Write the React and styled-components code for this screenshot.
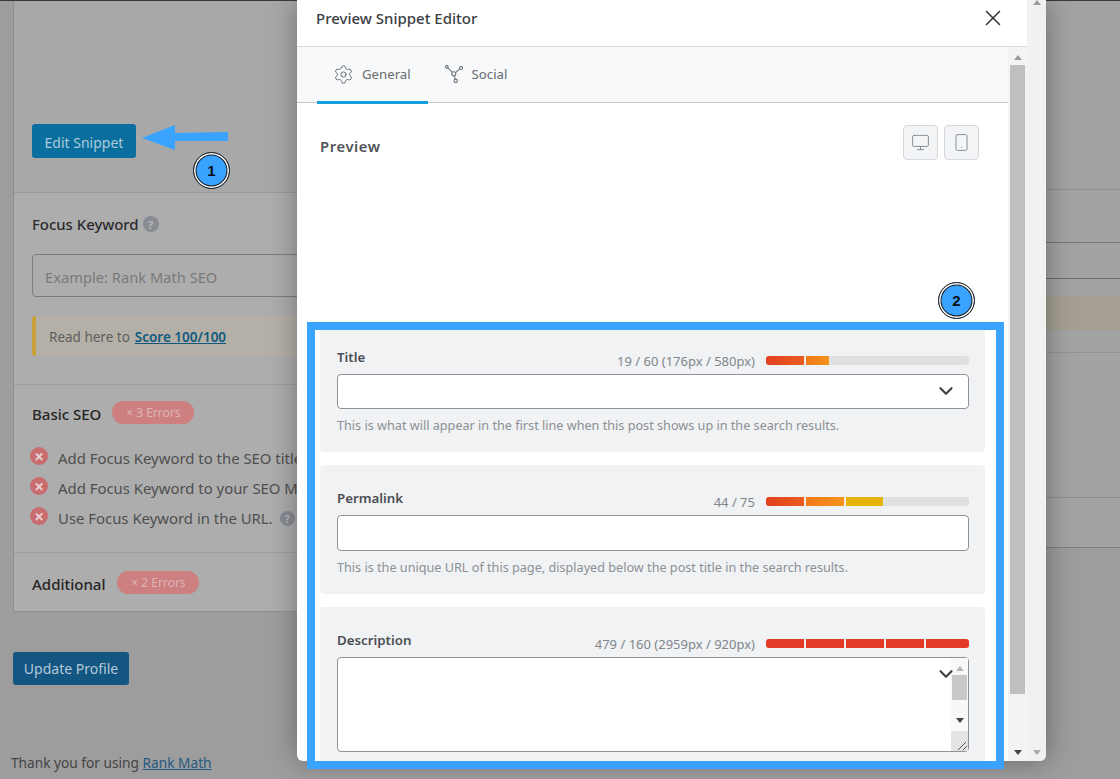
import React from 'react';
import styled, { createGlobalStyle } from 'styled-components';
import { Settings, Monitor, Smartphone, X, ChevronDown } from 'lucide-react';

const GlobalStyle = createGlobalStyle`
  html, body {
    margin: 0;
    padding: 0;
    background: #a0a0a0;
  }

  * {
    box-sizing: border-box;
  }
`;

const errorRows = [
  { text: 'Add Focus Keyword to the SEO title.' },
  { text: 'Add Focus Keyword to your SEO Meta' },
  { text: 'Use Focus Keyword in the URL.', help: true },
];

// what is left of the page to the right of the modal
const stripRows = [
  { height: 189, line: '#909090' },
  { height: 53, line: '#767676' },
  { height: 36, line: '#6c6c6c' },
  { height: 17 },
  { height: 34, bg: '#a59f93' },
  { height: 23, line: '#939393' },
  { height: 145, line: '#8f8f8f' },
  { height: 50, line: '#7d7d7d' },
];

const RED = '#e13b26';
const titleBar = [
  { width: 40, bg: 'linear-gradient(90deg, #e2401f, #ea5c1e)' },
  { width: 23, bg: 'linear-gradient(90deg, #f07a1a, #f5931a)', last: true },
];
const permalinkBar = [
  { width: 40, bg: 'linear-gradient(90deg, #e2401f, #ea5c1e)' },
  { width: 40, bg: 'linear-gradient(90deg, #f07a1a, #f5931a)' },
  { width: 37, bg: '#e6b30c', last: true },
];
const descriptionBar = [
  { width: 40, bg: RED },
  { width: 40, bg: RED },
  { width: 40, bg: RED },
  { width: 40, bg: RED },
  { width: 43, bg: RED, last: true },
];

const ProgressBar = ({ segments }) => (
  <Track>
    {segments.map((s, i) => (
      <Segment key={i} $width={s.width} $bg={s.bg} $last={s.last} />
    ))}
  </Track>
);

const SocialIcon = () => (
  <svg width="18" height="18" viewBox="0 0 18 18" fill="none" stroke="#6f7478" strokeWidth="1.1">
    <circle cx="1.8" cy="1.8" r="1.3" />
    <circle cx="16" cy="3" r="1.5" />
    <circle cx="8.8" cy="8.8" r="2" />
    <circle cx="10.7" cy="15.8" r="1.7" />
    <path d="M2.8 2.7 7.3 7.4M14.7 3.8 10.5 7.7M9.3 10.7 10.2 14.1" />
  </svg>
);

const App = () => (
  <Page>
    <GlobalStyle />

    <MainColumn>
      <Panel>
        <SnippetSection>
          <EditButton>Edit Snippet</EditButton>
        </SnippetSection>

        <FocusSection>
          <FocusTitle>
            Focus Keyword <HelpDot $size={16}>?</HelpDot>
          </FocusTitle>
          <KeywordInput placeholder="Example: Rank Math SEO" readOnly />
          <Notice>
            Read here to <NoticeLink href="#">Score 100/100</NoticeLink>
          </Notice>
        </FocusSection>

        <BasicSection>
          <SectionHead>
            <SectionTitle>Basic SEO</SectionTitle>
            <ErrorPill>× 3 Errors</ErrorPill>
          </SectionHead>
          <ErrorList>
            {errorRows.map(row => (
              <ErrorRow key={row.text}>
                <ErrorIcon>×</ErrorIcon>
                {row.text}
                {row.help && <HelpDot $size={15} $offset={-3}>?</HelpDot>}
              </ErrorRow>
            ))}
          </ErrorList>
        </BasicSection>

        <AdditionalSection>
          <SectionTitle>Additional</SectionTitle>
          <ErrorPill>× 2 Errors</ErrorPill>
        </AdditionalSection>
      </Panel>

      <UpdateButton>Update Profile</UpdateButton>
      <Footer>
        Thank you for using <FooterLink href="#">Rank Math</FooterLink>
      </Footer>
    </MainColumn>

    <SideStrip>
      {stripRows.map((row, i) => (
        <StripRow key={i} $height={row.height} $line={row.line} $bg={row.bg} />
      ))}
    </SideStrip>

    <Modal>
      <Dialog>
        <Header>
          <HeaderTitle>Preview Snippet Editor</HeaderTitle>
          <X size={26} strokeWidth={1.4} color="#33373b" />
        </Header>

        <DialogBody>
          <Content>
            <Tabs>
              <Tab $active>
                <TabIcon>
                  <Settings size={21} strokeWidth={1.1} color="#5f6468" />
                </TabIcon>
                General
              </Tab>
              <Tab>
                <SocialIcon />
                Social
              </Tab>
            </Tabs>

            <Scroller>
              <PreviewRow>
                <PreviewLabel>Preview</PreviewLabel>
                <DeviceButtons>
                  <DeviceButton>
                    <Monitor size={19} strokeWidth={1.1} color="#7c8186" />
                  </DeviceButton>
                  <DeviceButton>
                    <Smartphone size={19} strokeWidth={1.1} color="#7c8186" />
                  </DeviceButton>
                </DeviceButtons>
              </PreviewRow>

              <Cards>
                <Card $height={128}>
                  <CardHead>
                    <CardLabel>Title</CardLabel>
                    <Count>19 / 60 (176px / 580px)</Count>
                    <ProgressBar segments={titleBar} />
                  </CardHead>
                  <Field>
                    <FieldChevron>
                      <ChevronDown size={22} strokeWidth={2.4} color="#3f4347" />
                    </FieldChevron>
                  </Field>
                  <Help>This is what will appear in the first line when this post shows up in the search results.</Help>
                </Card>

                <Card $height={129}>
                  <CardHead>
                    <CardLabel>Permalink</CardLabel>
                    <Count>44 / 75</Count>
                    <ProgressBar segments={permalinkBar} />
                  </CardHead>
                  <Field $height={36} />
                  <Help>This is the unique URL of this page, displayed below the post title in the search results.</Help>
                </Card>

                <Card $height={170}>
                  <CardHead>
                    <CardLabel>Description</CardLabel>
                    <Count>479 / 160 (2959px / 920px)</Count>
                    <ProgressBar segments={descriptionBar} />
                  </CardHead>
                  <Field $height={95}>
                    <FieldChevron>
                      <ChevronDown size={22} strokeWidth={2.4} color="#3f4347" />
                    </FieldChevron>
                    <AreaScrollbar>
                      <Arrow $up $color="#b5b5b5" />
                      <AreaThumb />
                      <Arrow $color="#444" />
                      <Resizer>
                        <svg width="12" height="12" viewBox="0 0 12 12" stroke="#555" fill="none">
                          <path d="M2 11 10 3M7 11 11 7" />
                        </svg>
                      </Resizer>
                    </AreaScrollbar>
                  </Field>
                </Card>
              </Cards>
            </Scroller>
          </Content>

          <InnerScrollbar>
            <Arrow $up $color="#9c9c9c" />
            <InnerThumb />
            <Arrow $color="#444" />
          </InnerScrollbar>
        </DialogBody>
      </Dialog>

      <OuterScrollbar>
        <Arrow $up $color="#9c9c9c" />
        <Arrow $color="#aaa" />
      </OuterScrollbar>
    </Modal>

    <PointerArrow width="90" height="30" viewBox="0 0 90 30">
      <polygon points="0,14 33,1 33,9 86,8 86,17 33,17 33,26" fill="#3aa3ff" />
    </PointerArrow>
    <StepBadge $left={193} $top={152}>1</StepBadge>
    <StepBadge $left={938} $top={282}>2</StepBadge>
    <HighlightFrame />
  </Page>
);

const Page = styled.div`
  position: relative;
  display: flex;
  width: 1120px;
  height: 779px;
  overflow: hidden;
  background: #9d9d9d;
  font-family: 'Noto Sans', 'Open Sans', sans-serif;
`;

const MainColumn = styled.div`
  flex: none;
  width: 1046px;
  border-top: 1px solid #3a3a3a;
`;

const Panel = styled.div`
  margin-left: 13px;
  height: 611px;
  background: #adadad;
  border-left: 1px solid #8f8f8f;
  border-bottom: 1px solid #8f8f8f;
`;

const SnippetSection = styled.div`
  height: 192px;
  padding: 123px 0 0 18px;
  background: #a8a8a8;
  border-bottom: 1px solid #9a9a9a;
`;

const EditButton = styled.button`
  width: 104px;
  height: 34px;
  padding: 2px 0 0;
  border: 0;
  border-radius: 3px;
  background: #0a6f9f;
  color: #aacbdb;
  font: 14px 'Noto Sans', sans-serif;
`;

const FocusSection = styled.div`
  height: 192px;
  padding: 20px 0 0 18px;
  border-bottom: 1px solid #9f9f9f;
`;

const FocusTitle = styled.div`
  display: flex;
  align-items: center;
  gap: 4px;
  height: 22px;
  color: #2c2a2c;
  font-size: 14.9px;
  font-weight: 500;
`;

const HelpDot = styled.span`
  display: inline-flex;
  align-items: center;
  justify-content: center;
  width: ${p => p.$size}px;
  height: ${p => p.$size}px;
  margin-left: ${p => p.$offset || 0}px;
  border-radius: 50%;
  background: #888c92;
  color: #b9bbbe;
  font-size: 11px;
  font-weight: 700;
`;

const KeywordInput = styled.input`
  display: block;
  width: 100%;
  height: 43px;
  margin-top: 19px;
  padding: 2px 12px 0;
  border: 1px solid #7d7d7d;
  border-radius: 4px;
  background: #adadad;
  font: 14.7px 'Noto Sans', sans-serif;

  &::placeholder {
    color: #7a7a7a;
    opacity: 1;
  }
`;

const Notice = styled.div`
  display: flex;
  align-items: center;
  gap: 5px;
  height: 40px;
  margin-top: 19px;
  padding: 2px 0 0 13px;
  border-left: 4px solid #c99f3a;
  border-radius: 3px 0 0 3px;
  background: #b4b0a8;
  color: #5e5e5e;
  font-size: 13.5px;
`;

const NoticeLink = styled.a`
  color: #0f5a7e;
  font-weight: 600;
`;

const BasicSection = styled.div`
  height: 168px;
  padding: 16px 0 0 18px;
  border-bottom: 1px solid #9f9f9f;
`;

const SectionHead = styled.div`
  display: flex;
  align-items: center;
  gap: 11px;
`;

const SectionTitle = styled.div`
  margin-top: 3px;
  color: #242424;
  font-size: 15px;
  font-weight: 500;
`;

const ErrorPill = styled.span`
  display: inline-flex;
  align-items: center;
  justify-content: center;
  width: 82px;
  height: 23px;
  border-radius: 12px;
  background: #ce7f80;
  color: #dcb5b5;
  font-size: 12px;
`;

const ErrorList = styled.div`
  display: flex;
  flex-direction: column;
  margin-top: 19px;
`;

const ErrorRow = styled.div`
  display: flex;
  align-items: center;
  gap: 10px;
  height: 30px;
  margin-left: -2px;
  color: #4f4f4f;
  font-size: 14.9px;
  white-space: nowrap;
`;

const ErrorIcon = styled.span`
  display: inline-flex;
  align-items: center;
  justify-content: center;
  flex: none;
  width: 18px;
  height: 18px;
  margin-top: -4px;
  border-radius: 50%;
  background: #c96c70;
  color: #e8d0d0;
  font-size: 17px;
  font-weight: 700;
  line-height: 1;
`;

const AdditionalSection = styled.div`
  display: flex;
  align-items: center;
  gap: 12px;
  height: 58px;
  padding-left: 18px;
`;

const UpdateButton = styled.button`
  display: block;
  width: 116px;
  height: 33px;
  margin: 40px 0 0 13px;
  padding: 0;
  border: 0;
  border-radius: 3px;
  background: #145682;
  color: #b3c9d8;
  font: 14px 'Noto Sans', sans-serif;
`;

const Footer = styled.div`
  margin: 68px 0 0 11px;
  color: #444;
  font-size: 13.7px;
`;

const FooterLink = styled.a`
  color: #245a80;
`;

const SideStrip = styled.div`
  flex: 1;
  display: flex;
  flex-direction: column;
  border-top: 1px solid #3a3a3a;
`;

const StripRow = styled.div`
  flex: none;
  height: ${p => p.$height}px;
  background: ${p => p.$bg || '#a3a3a3'};
  border-bottom: ${p => (p.$line ? `1px solid ${p.$line}` : 0)};
`;

const Modal = styled.div`
  position: absolute;
  top: 0;
  left: 297px;
  display: flex;
  width: 749px;
  height: 761px;
  border-radius: 0 0 6px 6px;
  overflow: hidden;
  background: #fff;
  box-shadow: 0 0 28px rgba(0, 0, 0, 0.35);
`;

const Dialog = styled.div`
  display: flex;
  flex-direction: column;
  width: 730px;
`;

const Header = styled.header`
  display: flex;
  align-items: center;
  justify-content: space-between;
  flex: none;
  height: 47px;
  padding: 0 21px 10px 19px;
  border-bottom: 1px solid #dcdcdc;
`;

const HeaderTitle = styled.h2`
  margin: 0;
  color: #3a3e43;
  font-size: 15px;
  font-weight: 500;
`;

const DialogBody = styled.div`
  display: flex;
  flex: 1;
  min-height: 0;
`;

const Content = styled.div`
  flex: 1;
  min-width: 0;
`;

const Tabs = styled.div`
  display: flex;
  height: 56px;
  padding-left: 20px;
  background: #f8f9fa;
  border-bottom: 1px solid #c8c8c8;
`;

const Tab = styled.div`
  display: flex;
  align-items: center;
  gap: 9px;
  height: 57px;
  padding: 0 17px;
  border-bottom: 3px solid ${p => (p.$active ? '#0e9fdc' : 'transparent')};
  color: #666b70;
  font-size: 13.2px;
`;

const TabIcon = styled.span`
  display: flex;
  margin: 0 -1px;
`;

const Scroller = styled.div`
  padding: 22px 23px 0;
`;

const PreviewRow = styled.div`
  display: flex;
  align-items: center;
  justify-content: space-between;
  height: 35px;
  padding-right: 6px;
`;

const PreviewLabel = styled.div`
  margin-top: 6px;
  color: #4f5357;
  font-size: 14.8px;
  font-weight: 600;
  letter-spacing: 0.6px;
`;

const DeviceButtons = styled.div`
  display: flex;
  gap: 6px;
`;

const DeviceButton = styled.button`
  display: flex;
  align-items: center;
  justify-content: center;
  width: 35px;
  height: 35px;
  padding: 0;
  border: 1px solid #d5d8dc;
  border-radius: 4px;
  background: #f3f4f6;
`;

const Cards = styled.div`
  display: flex;
  flex-direction: column;
  gap: 13px;
  margin-top: 164px;
`;

const Card = styled.section`
  height: ${p => p.$height}px;
  padding: 22px 16px 0 17px;
  border-radius: 4px;
  background: #f1f2f4;
`;

const CardHead = styled.div`
  display: flex;
  align-items: center;
  height: 22px;
  margin-bottom: 6px;
`;

const CardLabel = styled.label`
  margin-right: auto;
  color: #4a4e53;
  font-size: 13.3px;
  font-weight: 600;
`;

const Count = styled.span`
  margin: 7px 11px 0 0;
  color: #80868b;
  font-size: 13px;
`;

const Track = styled.div`
  display: flex;
  width: 203px;
  height: 9px;
  margin-top: 6px;
  border-radius: 3px;
  overflow: hidden;
  background: #dfe0e1;
`;

const Segment = styled.div`
  width: ${p => p.$width}px;
  height: 100%;
  background: ${p => p.$bg};
  background-clip: padding-box;
  border-right: ${p => (p.$last ? 0 : '2px solid #f3ece6')};
`;

const Field = styled.div`
  position: relative;
  display: flex;
  justify-content: flex-end;
  height: ${p => p.$height || 35}px;
  border: 1px solid #8f9296;
  border-radius: 4px;
  background: #fff;
`;

const FieldChevron = styled.span`
  position: absolute;
  top: 5px;
  right: 11px;
  display: flex;
`;

const AreaScrollbar = styled.div`
  display: flex;
  flex-direction: column;
  align-items: center;
  width: 17px;
  padding-top: 8px;
  background: #f8f8f8;
`;

const AreaThumb = styled.div`
  width: 15px;
  height: 25px;
  margin: 4px 0 18px;
  background: #c8c8c8;
`;

const Resizer = styled.div`
  display: flex;
  align-items: flex-end;
  justify-content: flex-end;
  width: 100%;
  flex: 1;
  margin-top: 8px;
  background: #e4e4e4;
`;

const Help = styled.p`
  margin: 7px 0 0;
  color: #8b9095;
  font-size: 12.65px;
  line-height: 18px;
`;

const Arrow = styled.span`
  flex: none;
  width: 0;
  height: 0;
  border-left: 4.5px solid transparent;
  border-right: 4.5px solid transparent;
  ${p => (p.$up ? `border-bottom: 5px solid ${p.$color};` : `border-top: 5px solid ${p.$color};`)}
`;

const InnerScrollbar = styled.div`
  display: flex;
  flex-direction: column;
  align-items: center;
  flex: none;
  width: 19px;
  padding: 8px 0 6px;
  background: #f3f3f3;
`;

const InnerThumb = styled.div`
  width: 15px;
  height: 629px;
  margin: 5px 0 auto;
  background: #bfbfbf;
`;

const OuterScrollbar = styled.div`
  display: flex;
  flex-direction: column;
  align-items: center;
  justify-content: space-between;
  flex: none;
  width: 19px;
  padding-bottom: 6px;
  background: #f1f1f1;
`;

const PointerArrow = styled.svg`
  position: absolute;
  top: 124px;
  left: 142px;
`;

const StepBadge = styled.div`
  position: absolute;
  top: ${p => p.$top}px;
  left: ${p => p.$left}px;
  display: flex;
  align-items: center;
  justify-content: center;
  width: 37px;
  height: 37px;
  border: 1px solid #1a1a1a;
  border-radius: 50%;
  background: #3aa3ff;
  box-shadow: inset 0 0 0 1.5px #fff, inset 0 0 0 2.5px #1a1a1a;
  color: #07101a;
  font: 700 15px 'Liberation Sans', sans-serif;
`;

const HighlightFrame = styled.div`
  position: absolute;
  top: 322px;
  left: 307px;
  width: 697px;
  height: 447px;
  border: 8px solid #3aa3ff;
`;

export default App;
